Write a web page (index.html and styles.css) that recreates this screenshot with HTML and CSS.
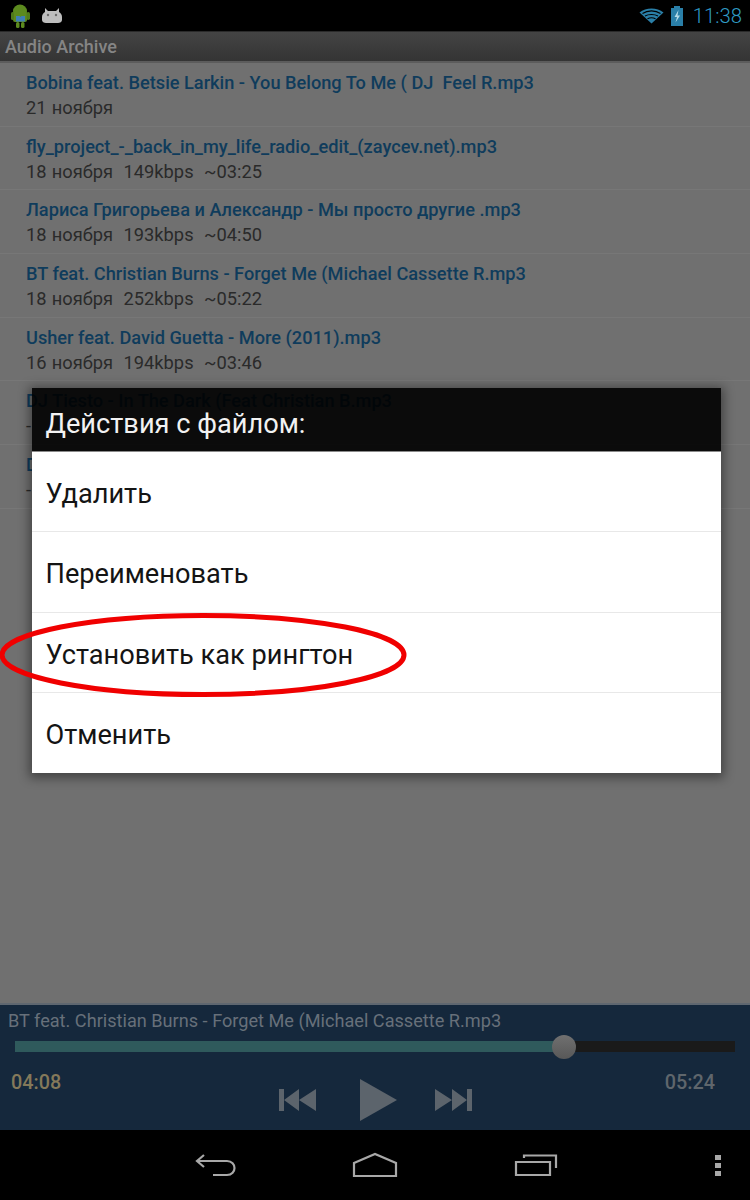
FILE: index.html
```html
<!DOCTYPE html>
<html lang="ru">
<head>
    <meta charset="UTF-8">
    <title>Audio Archive</title>
    <link rel="stylesheet" href="styles.css">
</head>
<body>
    <div class="screen">
        <div class="status-bar">
            <div class="status-left">
                <svg class="icon-robot" width="19" height="24" viewBox="0 0 19 24">
                    <ellipse cx="9" cy="7" rx="7" ry="6.500" fill="#5c8a1e"/>
                    <rect x="2" y="7" width="14" height="11" rx="2" fill="#5c8a1e"/>
                    <rect x="0" y="8" width="3" height="8" rx="1.500" fill="#4f7a1a"/>
                    <rect x="15.500" y="8" width="3.500" height="8" rx="1.700" fill="#4f7a1a"/>
                    <rect x="5" y="18" width="3.500" height="6" rx="1.500" fill="#5c8a1e"/>
                    <rect x="10" y="18" width="3.500" height="6" rx="1.500" fill="#5c8a1e"/>
                    <path d="M5 12h3.500l1 1 1-1H14v5.500H5z" fill="#3f7fb5"/>
                </svg>
                <svg class="icon-cat" width="22" height="17" viewBox="0 0 22 17">
                    <path d="M4 1l3 3h8l3-3 0 4c2 1 3 3 3 5v3c0 2-2 3-4 3H5c-2 0-4-1-4-3v-3c0-2 1-4 3-5z" fill="#bdbdbd"/>
                    <circle cx="7" cy="8" r="1.200" fill="#6a6a6a"/>
                    <circle cx="15" cy="8" r="1.200" fill="#6a6a6a"/>
                </svg>
            </div>
            <div class="status-right">
                <svg width="25" height="17" viewBox="0 0 25 17">
                    <path d="M0.500 5.500C7 0 18 0 24.500 5.500L12.500 16.500z" fill="#2a7fa8"/>
                    <path d="M3.500 6.500C8.500 3 16.500 3 21.500 6.500M6 9C9.500 7 15.500 7 19 9M8.500 11.800C10.800 10.600 14.200 10.600 16.500 11.800" fill="none" stroke="#000" stroke-width="1.100"/>
                </svg>
                <svg width="14" height="20" viewBox="0 0 14 20">
                    <rect x="4" y="0" width="6" height="2" fill="#2a7fa8"/>
                    <rect x="1" y="2" width="12" height="18" fill="#2a7fa8"/>
                    <path d="M8.500 4L4.500 11H7L5.500 16.500L10 9.500H7.500z" fill="#b5dbe8"/>
                </svg>
                <span class="clock">11:38</span>
            </div>
        </div>

        <div class="app-title">Audio Archive</div>

        <div class="file-list">
            <div class="file-row">
                <div class="file-name">Bobina feat. Betsie Larkin - You Belong To Me ( DJ  Feel R.mp3</div>
                <div class="file-meta">21 ноября</div>
            </div>
            <div class="file-row">
                <div class="file-name">fly_project_-_back_in_my_life_radio_edit_(zaycev.net).mp3</div>
                <div class="file-meta">18 ноября  149kbps  ~03:25</div>
            </div>
            <div class="file-row">
                <div class="file-name">Лариса Григорьева и Александр - Мы просто другие .mp3</div>
                <div class="file-meta">18 ноября  193kbps  ~04:50</div>
            </div>
            <div class="file-row">
                <div class="file-name">BT feat. Christian Burns - Forget Me (Michael Cassette R.mp3</div>
                <div class="file-meta">18 ноября  252kbps  ~05:22</div>
            </div>
            <div class="file-row">
                <div class="file-name">Usher feat. David Guetta - More (2011).mp3</div>
                <div class="file-meta">16 ноября  194kbps  ~03:46</div>
            </div>
            <div class="file-row">
                <div class="file-name">DJ Tiesto - In The Dark (Feat Christian B.mp3</div>
                <div class="file-meta">-</div>
            </div>
            <div class="file-row">
                <div class="file-name">D</div>
                <div class="file-meta">-</div>
            </div>
        </div>

        <div class="player">
            <div class="player-title">BT feat. Christian Burns - Forget Me (Michael Cassette R.mp3</div>
            <div class="seek">
                <div class="seek-fill"></div>
                <div class="seek-thumb"></div>
            </div>
            <div class="player-controls">
                <span class="time time-now">04:08</span>
                <div class="buttons">
                    <svg width="37" height="22" viewBox="0 0 37 22">
                        <path d="M0 0h5v22H0zM5 11L20 0v22zM20 11L37 0v22z" fill="#5c646c"/>
                    </svg>
                    <svg class="btn-play" width="37" height="42" viewBox="0 0 37 42">
                        <path d="M0 0L37 21L0 42z" fill="#5c646c"/>
                    </svg>
                    <svg width="37" height="22" viewBox="0 0 37 22">
                        <path d="M37 0h-5v22h5zM32 11L17 0v22zM17 11L0 0v22z" fill="#5c646c"/>
                    </svg>
                </div>
                <span class="time time-total">05:24</span>
            </div>
        </div>

        <div class="nav-bar">
            <svg class="nav-back" width="42" height="24" viewBox="0 0 42 24">
                <path d="M9 2L2 8L9 14M2 8H32C42 8 42 22 32 22H18" fill="none" stroke="#a8a8a8" stroke-width="2.200"/>
            </svg>
            <svg class="nav-home" width="46" height="26" viewBox="0 0 46 26">
                <path d="M2 11L23 2L44 11V24H2z" fill="none" stroke="#a8a8a8" stroke-width="2.200"/>
            </svg>
            <svg class="nav-recent" width="44" height="22" viewBox="0 0 44 22">
                <path d="M2 8H36V21H2zM10 4V1.500H42V14" fill="none" stroke="#a8a8a8" stroke-width="2.200"/>
            </svg>
            <div class="nav-dots"><i></i><i></i><i></i></div>
        </div>

        <div class="dialog">
            <div class="dialog-title">Действия с файлом:</div>
            <div class="dialog-item">Удалить</div>
            <div class="dialog-item">Переименовать</div>
            <div class="dialog-item">Установить как рингтон</div>
            <div class="dialog-item">Отменить</div>
        </div>

        <svg class="highlight" width="410" height="86" viewBox="0 0 410 86">
            <ellipse cx="203" cy="42" rx="201" ry="39.500" fill="none" stroke="#f00000" stroke-width="5"/>
        </svg>
    </div>
</body>
</html>
```

FILE: styles.css
```css
* {
    box-sizing: border-box;
}

body {
    margin: 0;
    background: #000;
    font-family: Roboto, "Liberation Sans", sans-serif;
}

.screen {
    position: relative;
    width: 750px;
    height: 1200px;
    display: flex;
    flex-direction: column;
    overflow: hidden;
    background: #707070;
}

.status-bar {
    height: 31px;
    flex: none;
    display: flex;
    justify-content: space-between;
    align-items: center;
    background: #000;
    padding: 0 8px 0 11px;
}

.status-left {
    display: flex;
    align-items: center;
    gap: 11px;
}

.status-right {
    display: flex;
    align-items: center;
    gap: 6px;
}

.clock {
    margin-left: 3px;
    font-size: 20.300px;
    font-weight: 300;
    color: #2f9ac4;
}

.app-title {
    height: 32px;
    flex: none;
    padding: 4px 0 0 5px;
    font-size: 18px;
    font-weight: 500;
    color: #858585;
    background: linear-gradient(#444444, #343434);
    border-top: 1px solid #2a2a2a;
    border-bottom: 2px solid #5c5c5c;
}

.file-list {
    flex: 1;
}

.file-row {
    height: 63.700px;
    padding: 9px 0 0 26px;
    border-bottom: 1px solid #777777;
}

.file-name {
    font-size: 18.200px;
    font-weight: 500;
    line-height: 22px;
    color: #0f3c5c;
    white-space: pre;
}

.file-meta {
    margin-top: 4px;
    font-size: 18.300px;
    line-height: 20px;
    color: #2a2a2a;
    white-space: pre;
    word-spacing: 0.700px;
}

.player {
    height: 127px;
    flex: none;
    padding: 5px 15px 0;
    background: #15283c;
    border-top: 2px solid #5f6770;
}

.player-title {
    margin-left: -7px;
    font-size: 18.150px;
    line-height: 22px;
    color: #67707a;
    white-space: nowrap;
}

.seek {
    position: relative;
    height: 11px;
    margin-top: 9px;
    background: #1a1a1a;
}

.seek-fill {
    width: 549px;
    height: 100%;
    background: #2f5a5c;
}

.seek-thumb {
    position: absolute;
    left: 537px;
    top: -6.500px;
    width: 24px;
    height: 24px;
    border-radius: 50%;
    background: linear-gradient(#707070, #585858);
}

.player-controls {
    display: flex;
    justify-content: space-between;
    margin: 0 20px 0 -4px;
}

.time {
    margin-top: 20px;
    font-size: 19.800px;
    font-weight: 500;
    line-height: 22px;
}

.time-now {
    color: #84795a;
}

.time-total {
    color: #5f666c;
}

.buttons {
    display: flex;
    align-items: center;
    height: 42px;
    margin-top: 27px;
    margin-left: 24px;
}

.btn-play {
    margin: 0 38px 0 44px;
}

.nav-bar {
    height: 70px;
    flex: none;
    display: flex;
    align-items: center;
    background: #000;
    padding: 0 0 0 195px;
}

.nav-home {
    margin-left: 115px;
}

.nav-recent {
    margin-left: 116px;
}

.nav-dots {
    margin-left: 157px;
    display: flex;
    flex-direction: column;
    gap: 3px;
}

.nav-dots i {
    display: block;
    width: 6px;
    height: 5px;
    background: #a8a8a8;
}

.dialog {
    position: absolute;
    left: 32px;
    top: 388px;
    width: 689px;
    height: 385px;
    box-shadow: 0 2px 10px 3px rgba(0, 0, 0, 0.4);
}

.dialog-title {
    height: 64px;
    padding: 21px 0 0 13.500px;
    font-size: 27.200px;
    line-height: 30px;
    color: #f2f2f2;
    background: rgba(0, 0, 0, 0.9);
    border-bottom: 1px solid #8a8a8a;
}

.dialog-item {
    height: 80.300px;
    padding: 27px 0 0 13.500px;
    font-size: 27.200px;
    line-height: 30px;
    color: #141414;
    background: #fff;
    border-bottom: 1px solid #e8e8e8;
}

.dialog-item:last-child {
    border-bottom: none;
}

.highlight {
    position: absolute;
    left: 0;
    top: 613px;
}
```
